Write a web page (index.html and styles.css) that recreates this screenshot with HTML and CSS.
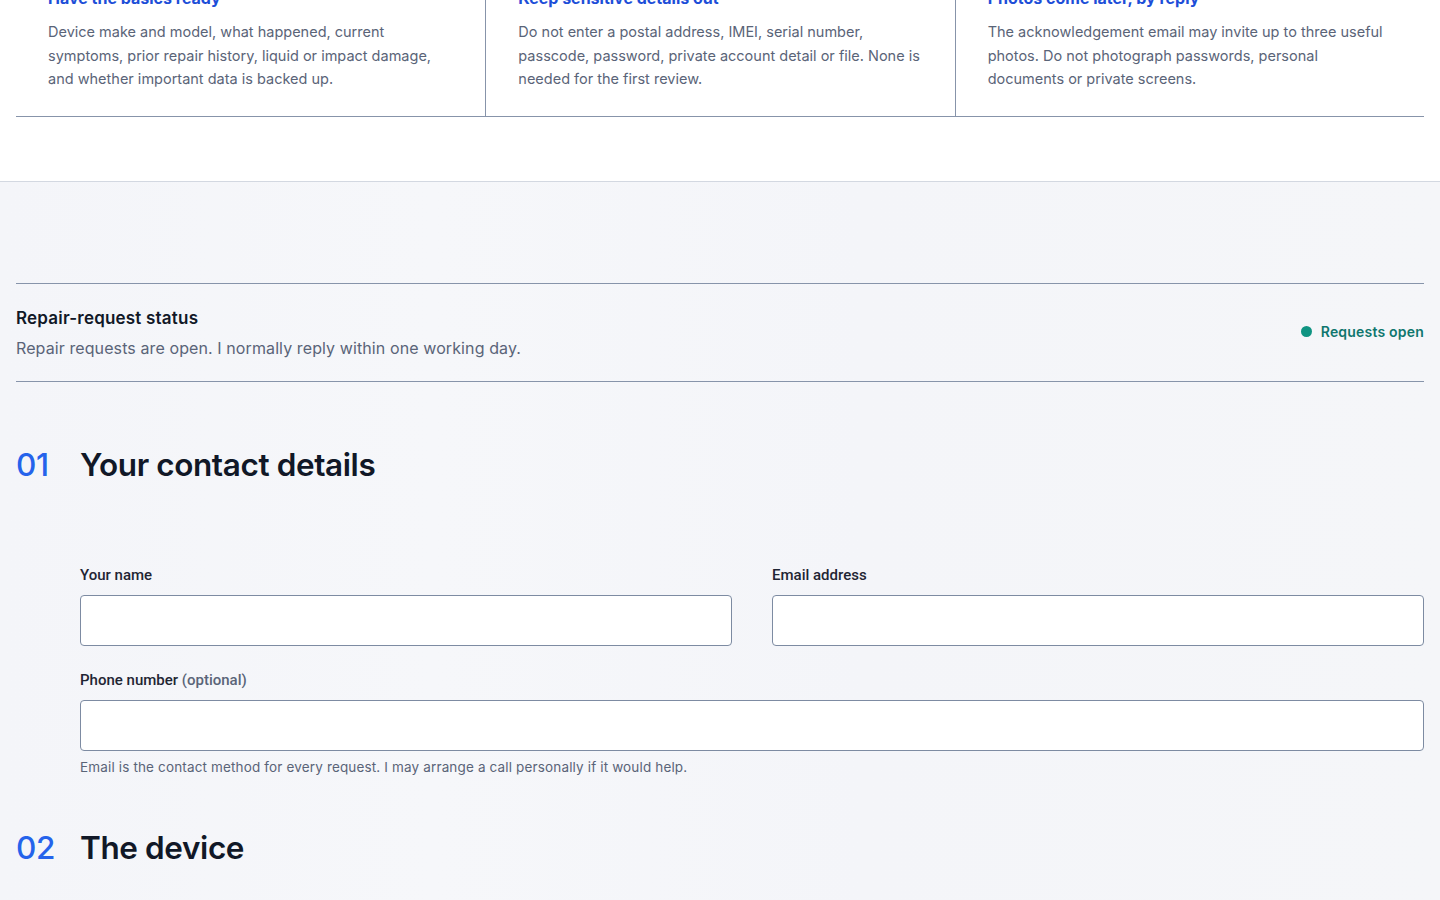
FILE: index.html
```html
<!DOCTYPE html>
<html lang="en">
<head>
<meta charset="utf-8">
<title>Repair request</title>
<link rel="stylesheet" href="styles.css">
</head>
<body>
<section class="intro">
  <div class="tips">
    <div class="tip">
      <h3 class="tip-title">Have the basics ready</h3>
      <p class="tip-text">Device make and model, what happened, current symptoms, prior repair history, liquid or impact damage, and whether important data is backed up.</p>
    </div>
    <div class="tip">
      <h3 class="tip-title">Keep sensitive details out</h3>
      <p class="tip-text">Do not enter a postal address, IMEI, serial number, passcode, password, private account detail or file. None is needed for the first review.</p>
    </div>
    <div class="tip">
      <h3 class="tip-title">Photos come later, by reply</h3>
      <p class="tip-text">The acknowledgement email may invite up to three useful photos. Do not photograph passwords, personal documents or private screens.</p>
    </div>
  </div>
</section>
<main class="form-area">
  <div class="status">
    <div class="status-copy">
      <h2 class="status-title">Repair-request status</h2>
      <p class="status-text">Repair requests are open. I normally reply within one working day.</p>
    </div>
    <div class="status-badge"><span class="dot"></span>Requests open</div>
  </div>

  <section class="step">
    <h2 class="step-head"><span class="step-num">01</span><span class="step-title">Your contact details</span></h2>
    <div class="fields">
      <div class="field-row two">
        <label class="field">
          <span class="label">Your name</span>
          <input class="input" type="text">
        </label>
        <label class="field">
          <span class="label">Email address</span>
          <input class="input" type="email">
        </label>
      </div>
      <label class="field phone">
        <span class="label">Phone number <span class="opt">(optional)</span></span>
        <input class="input" type="tel">
      </label>
      <p class="help">Email is the contact method for every request. I may arrange a call personally if it would help.</p>
    </div>
  </section>

  <section class="step step-2">
    <h2 class="step-head"><span class="step-num">02</span><span class="step-title">The device</span></h2>
  </section>
</main>
</body>
</html>
```
FILE: styles.css
```css
* { box-sizing: border-box; }
html, body { margin: 0; padding: 0; }
body {
  font-family: Inter, "Noto Sans", sans-serif;
  color: #111827;
  background: #ffffff;
  overflow: hidden;
  height: 900px;
}
.intro {
  background: #ffffff;
  padding-bottom: 64px;
  border-bottom: 1px solid #d3d8e1;
}
.tips {
  margin: 0 16px;
  display: grid;
  grid-template-columns: 1fr 1fr 1fr;
  border-bottom: 1px solid #8794aa;
}
.tip {
  padding: 0 32px 25px;
}
.tip + .tip { border-left: 1px solid #8794aa; }
.tip-title {
  margin: -13px 0 0;
  font-size: 16px;
  line-height: 22px;
  font-weight: 700;
  color: #1d4ed8;
}
.tip-text {
  margin: 11px 0 0;
  font-size: 14.5px;
  line-height: 23.5px;
  color: #5a6478;
  letter-spacing: 0;
}
.form-area {
  background: linear-gradient(90deg, #f4f5f9 0%, #f6f7fa 30%, #f4f5f9 60%, #f5f6f9 100%);
  padding: 101px 16px 0;
  min-height: 720px;
}
.status {
  display: flex;
  align-items: center;
  justify-content: space-between;
  border-top: 1px solid #8794aa;
  border-bottom: 1px solid #8794aa;
  padding: 23px 0 22px;
}
.status-title {
  margin: 0;
  font-size: 17px;
  line-height: 22px;
  font-weight: 600;
  letter-spacing: 0.2px;
  color: #111827;
}
.status-text {
  margin: 8px 0 0;
  font-size: 16px;
  line-height: 22px;
  letter-spacing: 0.1px;
  color: #5a6478;
}
.status-badge {
  display: flex;
  align-items: center;
  gap: 9px;
  font-size: 14px;
  font-weight: 600;
  letter-spacing: 0.2px;
  color: #0f766e;
  margin-bottom: 2px;
}
.dot {
  width: 11px;
  height: 11px;
  border-radius: 50%;
  background: #0f9482;
}
.step-head {
  margin: 63px 0 0;
  display: flex;
  align-items: baseline;
  font-size: 31.5px;
  line-height: 40px;
  font-weight: 600;
  letter-spacing: -0.4px;
}
.step-num {
  width: 64px;
  color: #2563eb;
  font-weight: 500;
}
.step-title { color: #111827; }
.fields {
  padding-left: 64px;
  margin-top: 80px;
}
.field-row.two {
  display: grid;
  grid-template-columns: 1fr 1fr;
  gap: 40px;
}
.field {
  display: flex;
  flex-direction: column;
}
.label {
  font-family: Roboto, "Liberation Sans", sans-serif;
  font-size: 15px;
  line-height: 20px;
  font-weight: 500;
  color: #1f2533;
  margin-bottom: 10px;
}
.opt { color: #5a6478; }
.input {
  height: 51px;
  border: 1px solid #7d8ba2;
  border-radius: 4px;
  background: #ffffff;
  font: inherit;
  padding: 0 14px;
}
.phone { margin-top: 24px; }
.help {
  margin: 7px 0 0;
  font-size: 13.5px;
  line-height: 18px;
  letter-spacing: 0.15px;
  color: #5a6478;
}
.step-2 .step-head { margin-top: 52px; }
```
